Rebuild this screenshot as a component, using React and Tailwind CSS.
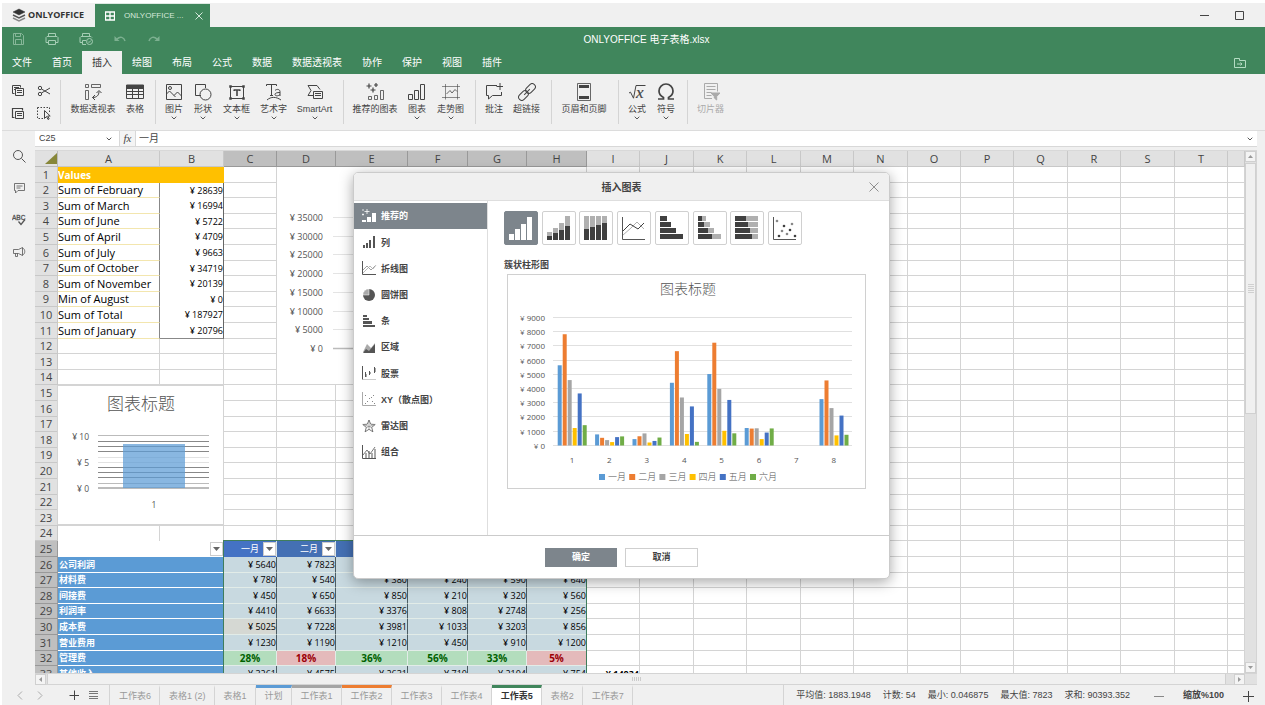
import React from "react";

const MENU = ["文件", "首页", "插入", "绘图", "布局", "公式", "数据", "数据透视表", "协作", "保护", "视图", "插件"];

function Svg({ w, h, children, className = "" }) {
  return (
    <svg width={w} height={h} viewBox={`0 0 ${w} ${h}`} fill="none" stroke="currentColor" className={className} aria-hidden="true">
      {children}
    </svg>
  );
}

const Chevron = () => (
  <Svg w={6} h={4}><path d="M.7.7 3 3 5.300.7" strokeWidth=".9" /></Svg>
);

const Copy = () => (
  <Svg w={14} h={14}><path d="M3.500 9.500h-2v-8h8v2M3 3.500h5M3 5.500h1" /><path d="M4.500 4.500h8v7h-8zM6 6.500h5M6 8.500h5" /></Svg>
);
const Paste = () => (
  <Svg w={14} h={14}><path d="M3.500 11.500h-2v-9h10v2M1.500 2.500h10" strokeWidth="1.200" /><path d="M4.500 5.500h8v7h-8zM6 7.500h5M6 9.500h5" /></Svg>
);
const Cut = () => (
  <Svg w={14} h={14}><circle cx="3" cy="4" r="1.700" /><circle cx="3" cy="10" r="1.700" /><path d="m4.500 5 8.500 5M4.500 9 13 4" /></Svg>
);
const Select = () => (
  <Svg w={14} h={14}><path d="M.5 1.500h12v5M.5 1.500v11h6" strokeDasharray="1.500 1.500" /><path d="M7.500 4.500v8l2-2 1.500 3 1.200-.6-1.500-2.900h2.500z" fill="#f0f0f0" /></Svg>
);

const ribbonIcons = {
  pivot: <><path d="M1.500 1.500h3v3h-3zM7.500 1.500h9v3h-9zM1.500 7.500h3v9h-3z" strokeWidth=".8" /><path d="M8.500 14.500c4 0 6.500-2 6.500-6M12.500 10 15 7.500l2.500 2.500M11 12l-2.500 2.500 2.500 2.500" /></>,
  table: <><path d="M.5 2.500h17v13H.5zM.5 8.500h17M.5 11.500h17M6.500 5v10M12.500 5v10" /><path d="M.5 2h17v3.500H.5z" fill="currentColor" /></>,
  image: <><path d="M1.500 1.500h15v15h-15z" /><circle cx="5" cy="5" r="1.500" /><path d="m1.500 11 3-3 6 6M9 12.500l3.500-3.500 4 4" /></>,
  shape: <><path d="M7 12.500H1.500v-11h10V5" /><circle cx="11.500" cy="11.500" r="5.500" /></>,
  textbox: <><path d="M2.500 3.500h13v12h-13z" /><path d="M1.500 2.500h2v2h-2zM14.500 2.500h2v2h-2zM1.500 14.500h2v2h-2zM14.500 14.500h2v2h-2z" fill="currentColor" strokeWidth=".5" /><path d="M6 7h6M9 7v6M6.200 6.500V8M11.800 6.500V8" strokeWidth="1.600" /></>,
  textart: <><path d="M1.500 3V1.500h10V3M6.500 1.500v11M5 12.500h3M10 7.500c2-2 5-1 5 1v4.500M15 9.500c-3 0-5 .5-5 2s3 2 5 0M2 17c4-3.500 9-3.500 14 0" /></>,
  smart: <><path d="M7 12.500H2l3-5-3-5h9l3 4" /><path d="M7.500 8.500h9v7h-9zM9 10.500h6M9 12.500h6" /></>,
  recommended: <><path d="M3 .5v5M.5 3h5M10 0v4M8 2h4M7 4.500v5M4.500 7h5" strokeWidth="1.200" /><path d="M2.500 13.500h3v3h-3zM8.500 12.500h3v4h-3zM14.500 7.500h3v9h-3z" strokeWidth=".8" /></>,
  chart: <path d="M.5 11.500h4v5h-4zM6.500 7.500h4v9h-4zM12.500 1.500h4v15h-4z" />,
  spark: <><path d="M0 3.500h18M0 14.500h18M3.500 1v15.500M15.500 1v15.500" strokeWidth=".6" /><path d="m4.500 11 3.500-3.500 2 2.500 3-3.500 2 2" strokeWidth=".8" /></>,
  comment: <path d="M12 2.500H1.500v10h2V16l4-3.500h9V9M15 0v7M11.500 3.500h7" />,
  link: <g transform="rotate(-45 9 9)"><rect x="-1.500" y="5.800" width="11" height="6.400" rx="3.200" /><rect x="8.500" y="5.800" width="11" height="6.400" rx="3.200" /><path d="M5 9h8" /></g>,
  header: <><path d="M2.500.5h13v17h-13z" strokeWidth=".8" /><path d="M4 3.500h10M4 14.500h10" strokeWidth="2.800" /></>,
  slicer: <><path d="M10 15.500H2.500V.5h13v8M4.500 3.500h9M4.500 6.500h9M4.500 9.500h5M4.500 12.500h5" /><path d="M9 10h9l-3.300 3.500V17L12.300 15v-1.500z" fill="currentColor" /></>,
};

function RibbonIcon({ name }) {
  if (name === "formula")
    return (
      <Svg w={18} h={18}><path d="m1 10 1.500-.8 3 6L8 2.500h9.500" /><text x="8" y="15" fontSize="17" fontStyle="italic" fontFamily="Liberation Serif, serif" fill="currentColor" strokeWidth=".2">x</text></Svg>
    );
  if (name === "omega")
    return (
      <Svg w={18} h={18}><path d="M1 16h5.500v-1.500C3.500 13 2 10.800 2 8a7 7 0 0 1 14 0c0 2.800-1.500 5-4.500 6.500V16H17" strokeWidth="1.700" /></Svg>
    );
  return <Svg w={18} h={18}>{ribbonIcons[name]}</Svg>;
}

const RIBBON = [
  [["数据透视表", "pivot", "w-[56px]"], ["表格", "table", "w-7"]],
  [["图片", "image", "w-7", 1], ["形状", "shape", "w-[30px]", 1], ["文本框", "textbox", "w-[37px]", 1], ["艺术字", "textart", "w-[37px]", 1], ["SmartArt", "smart", "w-[45px]", 1]],
  [["推荐的图表", "recommended", "w-[54px]"], ["图表", "chart", "w-[30px]", 1], ["走势图", "spark", "w-[37px]", 1]],
  [["批注", "comment", "w-7"], ["超链接", "link", "w-[37px]"]],
  [["页眉和页脚", "header", "w-[56px]"]],
  [["公式", "formula", "w-7", 1], ["符号", "omega", "w-[30px]", 1]],
  [["切片器", "slicer", "w-[37px]", 0, 1]],
];

function TitleBar() {
  return (
    <div className="flex h-6 items-stretch bg-[#f0f0f0]">
      <button className="flex w-[93px] items-center gap-[2px] pl-[10px] text-[#333]">
        <Svg w={14} h={14}>
          <path d="m1 4 6-3 6 3-6 3z" fill="#333" strokeWidth=".5" />
          <path d="m1 7 6 3 6-3" stroke="#555" strokeWidth="1.500" /><path d="m1 10 6 3 6-3" stroke="#888" strokeWidth="1.500" />
        </Svg>
        <span className="font-['Open_Sans',sans-serif] text-[9px] font-bold">ONLYOFFICE</span>
      </button>
      <div className="flex w-[115px] items-center border-t border-[#dfe9e3] bg-[#40865c] pl-[10px] text-[#d4e8db]">
        <Svg w={10} h={10}><path d="M.5 1h9v8h-9zM5 1v8M.5 5h9" stroke="#fff" strokeWidth="1.300" /></Svg>
        <span className="ml-[9px] flex-1 text-[8px]">ONLYOFFICE ...</span>
        <button aria-label="关闭标签" className="mr-[7px]"><Svg w={8} h={8}><path d="m.5.5 7 7M7.500.5l-7 7" /></Svg></button>
      </div>
      <div className="flex flex-1 items-center justify-end gap-[26px] pr-[21px] text-[#444]">
        <button aria-label="最小化"><Svg w={9} h={9}><path d="M0 4.500h9" /></Svg></button>
        <button aria-label="最大化"><Svg w={9} h={9}><path d="M.5.5h8v8h-8z" /></Svg></button>
      </div>
    </div>
  );
}

function Header() {
  return (
    <header className="bg-[#40865c] text-white">
      <div className="flex h-6 items-center">
        <div className="flex flex-1 items-center gap-[18px] pl-2 text-[#a5cdb4]">
          <button aria-label="保存" className="opacity-70"><Svg w={16} h={12}><path d="M3.500.5h8l2 2v9h-10zM5.500.5v3h5v-3M5.500 11.500v-5h6v5" /></Svg></button>
          <button aria-label="打印"><Svg w={16} h={12}><path d="M4.500 3V.5h7V3M4.500 9.500H2v-5l1-1h10l1 1v5h-2.500M4.500 7.500h7v4h-7z" /></Svg></button>
          <button aria-label="快速打印"><Svg w={16} h={12}><path d="M4.500 3V.5h7V3M4.500 9.500H2v-5l1-1h10l1 1M8 7.500H4.500v4H8" /><circle cx="11.500" cy="8.500" r="3" /><path d="m10 8.500 1 1 2-2" /></Svg></button>
          <button aria-label="撤消" className="opacity-60"><Svg w={16} h={12}><path d="M2.500 3v5h5z" fill="currentColor" stroke="none" /><path d="M5 6c3-3 7-2 8 2" strokeWidth="1.500" /></Svg></button>
          <button aria-label="重做" className="opacity-60"><Svg w={16} h={12}><path d="M13.500 3v5h-5z" fill="currentColor" stroke="none" /><path d="M11 6C8 3 4 4 3 8" strokeWidth="1.500" /></Svg></button>
        </div>
        <h1 className="pl-[18px] text-[10px]">ONLYOFFICE 电子表格.xlsx</h1>
        <div className="flex-1" />
      </div>
      <nav className="flex h-[23px] items-stretch text-[10px]">
        {MENU.map((m) => (
          <button key={m} className={m === "插入" ? "bg-[#f0f0f0] px-[10px] text-[#333]" : "px-[10px]"}>{m}</button>
        ))}
        <button aria-label="打开文件位置" className="ml-auto mr-[19px] text-[#b4dcc3]">
          <Svg w={12} h={10}><path d="M.5.5h5v2h6v7H.5zM3 6h5M6.500 4.500 8 6 6.500 7.500" /></Svg>
        </button>
      </nav>
    </header>
  );
}

function Ribbon() {
  return (
    <div className="flex h-[57px] items-start border-b border-[#dcdcdc] bg-[#f0f0f0] pt-[6px] text-[9px] text-[#444]">
      <div className="grid h-11 w-[58px] grid-cols-2 items-center justify-items-center px-[3px]">
        <button aria-label="复制"><Copy /></button>
        <button aria-label="剪切"><Cut /></button>
        <button aria-label="粘贴"><Paste /></button>
        <button aria-label="全选"><Select /></button>
      </div>
      {RIBBON.map((group, i) => (
        <div key={i} className="flex h-11 border-l border-[#d4d4d4] pr-[6px] pl-1">
          {group.map(([label, icon, w, more, off]) => (
            <button key={label} disabled={!!off} className={`${w} flex flex-col items-center whitespace-nowrap pt-[3px] ${off ? "text-[#aaa]" : ""}`}>
              <RibbonIcon name={icon} />
              <span className="mt-[2px] leading-3">{label}</span>
              {more ? <span className="flex h-[6px] items-center"><Chevron /></span> : null}
            </button>
          ))}
        </div>
      ))}
    </div>
  );
}

function SideBar() {
  return (
    <aside className="flex w-[33px] shrink-0 flex-col items-center gap-[18px] bg-[#f0f0f0] pt-[18px] text-[#555]">
      <button aria-label="查找"><Svg w={14} h={14}><circle cx="6" cy="6" r="4.500" /><path d="m9.500 9.500 4 4" /></Svg></button>
      <button aria-label="批注"><Svg w={14} h={14}><path d="M2.500 2.500h10v7H6L3.500 12V9.500h-1zM4.500 5h6M4.500 7h4" strokeWidth=".8" /></Svg></button>
      <button aria-label="拼写检查"><Svg w={14} h={14}><text x="0" y="7" fontSize="6.500" strokeWidth=".3" fill="currentColor" fontFamily="Liberation Sans, sans-serif">ABC</text><path d="m6.500 8.500 2.500 3 4-5" strokeWidth="1.300" /></Svg></button>
      <button aria-label="反馈和支持"><Svg w={14} h={14}><path d="M1.500 4.500h5l4-2v8l-4-2h-5zM3.500 8.500v3h2v-3M10.500 3c3 1 3 6 0 7" strokeWidth=".8" /></Svg></button>
    </aside>
  );
}

function FormulaBar() {
  return (
    <div className="flex h-[15px] items-stretch bg-white text-[9px] text-[#444]">
      <input aria-label="名称框" defaultValue="C25" className="w-[71px] bg-white pl-1 outline-none" />
      <button aria-label="名称列表" className="flex w-[13px] items-center justify-start"><Chevron /></button>
      <button aria-label="插入函数" className="w-[17px] border-x border-[#d8d8d8] bg-[#f4f4f4] font-['Liberation_Serif',serif] text-[11px] italic leading-none">fx</button>
      <input aria-label="编辑栏" defaultValue="一月" className="min-w-0 flex-1 bg-white pl-[3px] text-[10px] outline-none" />
      <button aria-label="展开编辑栏" className="w-[10px]"><Chevron /></button>
    </div>
  );
}

const COLS = [
  ["A", "w-[102px]"], ["B", "w-[64px]"], ["C", "w-[53px]"], ["D", "w-[59px]"], ["E", "w-[72px]"], ["F", "w-[60px]"],
  ["G", "w-[59px]"], ["H", "w-[60px]"], ["I", "w-[53px]"], ["J", "w-[54px]"], ["K", "w-[53px]"], ["L", "w-[54px]"],
  ["M", "w-[53px]"], ["N", "w-[54px]"], ["O", "w-[53px]"], ["P", "w-[53px]"], ["Q", "w-[54px]"], ["R", "w-[53px]"],
  ["S", "w-[54px]"], ["T", "w-[53px]"], ["", ""],
];

const SUMS = [
  ["Sum of February", 28639], ["Sum of March", 16994], ["Sum of June", 5722], ["Sum of April", 4709], ["Sum of July", 9663],
  ["Sum of October", 34719], ["Sum of November", 20139], ["Min of August", 0], ["Sum of Total", 187927], ["Sum of January", 20796],
];

const DATA = [
  ["公司利润", [5640, 7823, 4600, 1230, 3660, 1430]],
  ["材料费", [780, 540, 380, 240, 590, 640]],
  ["间接费", [450, 650, 850, 210, 320, 560]],
  ["利润率", [4410, 6633, 3376, 808, 2748, 256]],
  ["成本费", [5025, 7228, 3981, 1033, 3203, 856]],
  ["营业费用", [1230, 1190, 1210, 450, 910, 1200]],
  ["管理费", [0.28, 0.18, 0.36, 0.56, 0.33, 0.05]],
  ["其他收入", [3261, 4575, 2631, 710, 2104, 754]],
];
const MONTHS = ["一月", "二月", "三月", "四月", "五月", "六月"];

function FilterButton() {
  return (
    <button aria-label="筛选" className="flex h-[14px] w-[13px] shrink-0 items-center justify-center border border-[#ccc] bg-white text-[#666]">
      <Svg w={7} h={4}><path d="M0 0h7L3.500 4z" fill="currentColor" stroke="none" /></Svg>
    </button>
  );
}

const GRID = "border-r border-b border-[#d4d4d4] bg-white";
const NUM = "pl-0 pr-0 text-right text-[9px]";

function Cell({ row, col }) {
  if (row === 1 && col < 2)
    return <td className="bg-[#ffc000] pl-0 text-[10px] font-bold text-white">{col === 0 ? "Values" : ""}</td>;
  if (row >= 2 && row <= 11 && col === 0)
    return <td className="border-r border-b border-r-[#888] border-b-[#f3e6ae] bg-white pl-0">{SUMS[row - 2][0]}</td>;
  if (row >= 2 && row <= 11 && col === 1)
    return <td className={`${NUM} border-r border-r-[#666] bg-white ${row === 11 ? "border-b border-b-[#888]" : ""}`}>¥ {SUMS[row - 2][1]}</td>;
  if (row === 24 && col < 2) return <td className="border-r border-[#d4d4d4] bg-white" />;
  if (row === 25 && col === 0) return <td className="bg-white" />;
  if (row === 25 && col === 1) return <td className="bg-white pr-px"><span className="flex justify-end"><FilterButton /></span></td>;
  if (row === 25 && col < 8)
    return (
      <td className={`border-r border-[#d8e4ea] text-[9px] text-white ${col === 2 ? "bg-[#4472c4]" : "bg-[#4470b4]"}`}>
        <span className="flex items-center justify-end gap-1"><span>{MONTHS[col - 2]}</span><FilterButton /></span>
      </td>
    );
  if (row > 25 && col === 0)
    return <td colSpan={2} className="border-b border-white bg-[#5b9bd5] pl-px text-[9px] font-bold text-white">{DATA[row - 26][0]}</td>;
  if (row === 32 && col < 8) {
    const v = DATA[6][1][col - 2];
    return (
      <td className={`border-r border-b border-[#e2ece8] text-center text-[10px] font-bold ${v < 0.2 ? "bg-[#e4babb] text-[#9c0006]" : "bg-[#b3ddbd] text-[#006100]"}`}>
        {Math.round(v * 100)}%
      </td>
    );
  }
  if (row > 25 && col < 8)
    return <td className={`${NUM} border-r border-b border-r-[#4c5c62] border-b-[#e2ece8] ${row === 30 && col === 2 ? "bg-[#d5d8d3]" : "bg-[#c8d9e0]"}`}>¥ {DATA[row - 26][1][col - 2]}</td>;
  if (row === 33 && col === 8) return <td className={`${GRID} ${NUM} font-bold`}>¥ 14034</td>;
  return <td className={GRID} />;
}

const ROW_HEIGHTS = ["h-4", "h-[15px]", "h-4", "h-[15px]", "h-4"];

function Sheet() {
  const rows = Array.from({ length: 33 }, (_, i) => i + 1);
  return (
    <div className="relative min-w-0 flex-1 overflow-hidden bg-white">
      <table className="w-full table-fixed border-separate border-spacing-0 whitespace-nowrap font-['Open_Sans','Noto_Sans_CJK_SC',sans-serif] text-[11px] leading-[14px] text-black [&_td]:overflow-hidden [&_td]:py-0 [&_th]:p-0">
        <colgroup>
          <col className="w-[23px]" />
          {COLS.map(([l, w]) => <col key={l} className={w} />)}
        </colgroup>
        <thead>
          <tr className="h-4">
            <th className="border-r border-b border-[#bbb] bg-[#e1e1e1]">
              <span className="flex justify-end"><Svg w={12} h={11}><path d="M12 0v11H0z" fill="#87873a" stroke="none" /></Svg></span>
            </th>
            {COLS.map(([l], i) => (
              <th key={l} className={`border-r border-b font-normal text-[#444] ${i > 1 && i < 8 ? "border-[#999] bg-[#bfbfbf]" : "border-[#c8c8c8] bg-[#e1e1e1]"}`}>{l}</th>
            ))}
          </tr>
        </thead>
        <tbody>
          {rows.map((r) => (
            <tr key={r} className={ROW_HEIGHTS[(r - 1) % 5]}>
              <th className={`border-r border-b text-center text-[11px] font-normal text-[#444] ${r > 24 ? "border-[#999] bg-[#bfbfbf]" : "border-[#c8c8c8] bg-[#e1e1e1]"}`}>{r}</th>
              {COLS.map(([l], c) => (r > 25 && c === 1 ? null : <Cell key={l} row={r} col={c} />))}
            </tr>
          ))}
        </tbody>
      </table>
      <div className="pointer-events-none absolute top-[389px] left-[188px] h-[160px] w-[364px] border border-[#3f7d5c]" />
      <div className="absolute top-4 left-[242px] h-[218px] w-[309px] border-b border-[#d4d4d4] bg-white"><BackChart /></div>
      <div className="absolute top-[234px] left-[22px] h-[140px] w-[167px] border border-[#d4d4d4] bg-white"><SmallChart /></div>
    </div>
  );
}

const CHART_FONT = "Open Sans, Noto Sans CJK SC, sans-serif";

function BackChart() {
  return (
    <svg width="308" height="216" viewBox="0 0 308 216" fontFamily={CHART_FONT} fontSize="9" fill="#555">
      {Array.from({ length: 8 }, (_, i) => {
        const y = 50.500 + Math.round(i * 18.700);
        return (
          <g key={i}>
            <path d={`M56 ${y}h240`} stroke={i === 7 ? "#bbb" : "#e4e4e4"} strokeWidth={i === 7 ? 1.500 : 1} />
            <text x="46" y={y + 3} textAnchor="end">¥ {35000 - i * 5000}</text>
          </g>
        );
      })}
    </svg>
  );
}

function SmallChart() {
  return (
    <svg width="165" height="137" viewBox="0 0 165 137" fontFamily={CHART_FONT} fontSize="8.500" fill="#555">
      <text x="83" y="24" fontSize="17" fontWeight="300" textAnchor="middle">图表标题</text>
      {[49.500, 55.500, 60.500, 65.500, 71.500, 76.500, 81.500, 86.500, 91.500, 97.500].map((y, i) => (
        <path key={y} d={`M40 ${y}h111`} stroke={i === 4 || i === 5 ? "#e2e2e2" : i === 0 || i === 9 ? "#bbb" : "#888"} />
      ))}
      <path d="M40 102h111" stroke="#bbb" strokeWidth="2" />
      <path d="M65 58h62v44H65z" fill="#5b9bd5" opacity=".72" />
      <text x="31" y="54" textAnchor="end">¥ 10</text>
      <text x="31" y="80" textAnchor="end">¥ 5</text>
      <text x="31" y="106" textAnchor="end">¥ 0</text>
      <text x="96" y="122" textAnchor="middle">1</text>
    </svg>
  );
}

const SERIES = ["#5b9bd5", "#ed7d31", "#a5a5a5", "#ffc000", "#4472c4", "#70ad47"];

function PreviewChart() {
  return (
    <svg width="357" height="213" viewBox="0 0 357 213" fontFamily={CHART_FONT} fontSize="8" fill="#555">
      <text x="180" y="19" fontSize="14" fontWeight="300" textAnchor="middle">图表标题</text>
      {Array.from({ length: 10 }, (_, i) => {
        const y = 42.500 + Math.round(i * 14.200);
        return (
          <g key={i}>
            <path d={`M45 ${y}h299`} stroke="#e0e0e0" />
            <text x="37" y={y + 3} textAnchor="end">¥ {9000 - i * 1000}</text>
          </g>
        );
      })}
      {DATA.map(([name, values], c) => (
        <g key={name}>
          {values.map((v, s) => (
            <rect key={s} x={49.700 + c * 37.400 + s * 5} width="4" y={170.500 - (v * 128) / 9000} height={(v * 128) / 9000} fill={SERIES[s]} />
          ))}
          <text x={64 + c * 37.400} y="188" textAnchor="middle">{c + 1}</text>
        </g>
      ))}
      {MONTHS.map((m, i) => (
        <g key={m}>
          <rect x={91 + i * 30.200} y="199" width="6" height="6" fill={SERIES[i]} />
          <text x={100 + i * 30.200} y="205" fontSize="9" fontWeight="300">{m}</text>
        </g>
      ))}
    </svg>
  );
}

const D = "#555";
const L = "#aaa";
const listIcons = [
  <><path d="M0 11h4v2H0zM5 8h4v5H5zM10 4h4v9h-4z" fill="#fff" stroke="none" /><path d="M5 0v5M2.500 2.500h5M1 4.500v2M0 5.500h2M1 0v2" stroke="#fff" strokeWidth=".8" /></>,
  <path d="M1 10h2v3H1zM4 8h2v5H4zM7 5h2v8H7zM11 1h2v12h-2z" fill={D} stroke="none" />,
  <><path d="M.5 0v13.500H14" stroke={D} /><path d="m1 9 4-4 4 4 4-4" stroke="#888" strokeWidth=".8" /><path d="m1 12 7-7 3 3 3-4" stroke={L} strokeWidth=".8" /></>,
  <><circle cx="7" cy="7" r="6" fill={D} stroke="none" /><path d="M7 7V1a6 6 0 0 0-6 6z" fill={L} stroke="#fff" strokeWidth=".5" /></>,
  <><path d="M1 1h4v2H1zM1 4h6v2H1zM1 7h9v3H1zM1 11h12v2H1z" fill={D} stroke="none" /></>,
  <><path d="m1 12 4-8 4 4 4-5v9z" fill={L} stroke="none" /><path d="m1 13 3-4 3 2 6-7v9z" fill={D} stroke="none" /></>,
  <><path d="M.5 0v13.500" stroke={D} /><path d="M1 13.500h13" stroke="#ccc" /><path d="M3.500 6v5M7.500 5v4M12.500 1v6" stroke={D} /><path d="M3 8h1.500v3H3zM7 6h1.500v2H7zM12 2h1.500v4H12z" fill={D} stroke="none" /></>,
  <><path d="M.5 0v13.500H14" stroke={L} /><path d="M3 3h1v1H3zM7 6h1v1H7zM11 3h1v1h-1zM5 9h1v1H5zM9 5h1v1H9zM10 9h1v1h-1zM3 11h1v1H3zM12 11h1v1h-1z" fill="#888" stroke="none" /></>,
  <><path d="m7 1 1.700 4.200 4.500.3-3.500 2.900 1.200 4.400L7 10.300l-3.900 2.500 1.200-4.400L.8 5.500l4.500-.3z" stroke={D} strokeWidth=".8" /><path d="M7 1v9M1 5.500l9 3M13 5.500l-9 3" stroke="#888" strokeWidth=".7" /></>,
  <><path d="M.5 0v13.500H14" stroke={D} /><path d="M3 8h2v5H3zM6 6h2v7H6zM9 8h2v5H9zM12 4h2v9h-2z" fill={L} stroke="none" /><path d="m1 10 4-5 3 4 5-7" stroke={D} strokeWidth=".8" /></>,
];
const CATEGORIES = ["推荐的", "列", "折线图", "圆饼图", "条", "区域", "股票", "XY（散点图）", "雷达图", "组合"];

const K = "#404040";
const G = "#b0b0b0";
const typeIcons = [
  ["簇状柱形图", <path d="M0 18h5v6H0zM6 13h5v11H6zM12 8h5v16h-5zM18 1h5v23h-5z" fill="#fff" />],
  ["堆积柱形图", <><path d="M0 16h5v4H0zM6 12h5v5H6zM12 7h5v7h-5zM18 0h5v10h-5z" fill={G} /><path d="M0 20h5v4H0zM6 17h5v7H6zM12 14h5v10h-5zM18 10h5v14h-5z" fill={K} /></>],
  ["百分比堆积柱形图", <><path d="M0 0h5v13H0zM6 0h5v11H6zM12 0h5v9h-5zM18 0h5v7h-5z" fill={G} /><path d="M0 13h5v11H0zM6 11h5v13H6zM12 9h5v15h-5zM18 7h5v17h-5z" fill={K} /></>],
  ["折线图", <><path d="m1 19 8-7 6-6 7 7" fill="none" stroke={G} /><path d="m1 15 7-7 8 5 6-6" fill="none" stroke={K} /><path d="M.5 1v22.500H23" fill="none" stroke={D} /></>],
  ["簇状条形图", <path d="M0 0h7v5H0zM0 6h11v5H0zM0 12h16v5H0zM0 18h23v5H0z" fill={K} />],
  ["堆积条形图", <><path d="M4 0h4v5H4zM6 6h6v5H6zM10 12h6v5h-6zM14 18h9v5h-9z" fill={G} /><path d="M0 0h4v5H0zM0 6h6v5H0zM0 12h10v5H0zM0 18h14v5H0z" fill={K} /></>],
  ["百分比堆积条形图", <><path d="M11 0h12v5H11zM13 6h10v5H13zM15 12h8v5h-8zM17 18h6v5h-6z" fill={G} /><path d="M0 0h11v5H0zM0 6h13v5H0zM0 12h15v5H0zM0 18h17v5H0z" fill={K} /></>],
  ["散点图", <><path d="M.5 1v22.500H23" fill="none" stroke={D} /><g fill={K}><circle cx="11" cy="10" r="1.300" /><circle cx="17" cy="14" r="1.300" /><circle cx="6" cy="20" r="1.300" /><circle cx="22" cy="20" r="1.300" /></g><g fill="#888"><circle cx="4" cy="5" r="1.300" /><circle cx="19" cy="8" r="1.300" /><circle cx="9" cy="15" r="1.300" /><circle cx="14" cy="18" r="1.300" /></g></>],
];

function ChartDialog() {
  return (
    <div className="absolute inset-0 flex items-start justify-center pt-[172px] pr-[22px]">
      <div role="dialog" aria-label="插入图表" className="w-[537px] overflow-hidden rounded-[5px] border border-[#cbcbcb] bg-white text-[#444] shadow-[0_3px_14px_rgba(0,0,0,0.35)]">
        <div className="flex h-7 items-center border-b border-[#dedede] bg-[#f0f0f0] pt-px">
          <h2 className="flex-1 pl-5 text-center text-[10px] font-bold">插入图表</h2>
          <button aria-label="关闭" className="mr-[10px] text-[#777]"><Svg w={10} h={10}><path d="m.5.5 9 9M9.500.5l-9 9" strokeWidth=".8" /></Svg></button>
        </div>
        <div className="flex h-[334px]">
          <ul className="grid h-[264px] w-[133px] shrink-0 auto-rows-fr pt-[2px] text-[9px] font-bold">
            {CATEGORIES.map((c, i) => (
              <li key={c} className="flex">
                <button className={`flex w-full items-center gap-1 pt-px pl-2 ${i === 0 ? "bg-[#7d858c] text-white" : ""}`}>
                  <Svg w={15} h={15}>{listIcons[i]}</Svg><span className="pt-px">{c}</span>
                </button>
              </li>
            ))}
          </ul>
          <div className="border-l border-[#dedede] pl-4">
            <div className="flex w-[298px] justify-between pt-[10px]">
              {typeIcons.map(([name, icon], i) => (
                <button key={name} aria-label={name} className={`flex h-[34px] w-[34px] items-center justify-center rounded-[2px] border ${i === 0 ? "border-[#7d858c] bg-[#7d858c]" : "border-[#d0d0d0]"}`}>
                  <svg width="24" height="24" viewBox="0 0 24 24" aria-hidden="true">{icon}</svg>
                </button>
              ))}
            </div>
            <h3 className="mt-[13px] text-[9px] font-bold leading-[14px]">簇状柱形图</h3>
            <div className="mt-[2px] ml-[3px] border border-[#d0d0d0]"><PreviewChart /></div>
          </div>
        </div>
        <div className="flex h-[43px] items-center justify-center gap-2 border-t border-[#cbcbcb] text-[9px] font-bold">
          <button className="h-[19px] w-[72px] bg-[#7d858c] pt-px text-white">确定</button>
          <button className="h-[19px] w-[73px] border border-[#cfcfcf] bg-white pt-px">取消</button>
        </div>
      </div>
    </div>
  );
}

function Arrow({ d, label }) {
  return (
    <button aria-label={label} className="flex h-[11px] w-[11px] shrink-0 items-center justify-center border border-[#d0d0d0] bg-[#f4f4f4] text-[#999]">
      <Svg w={5} h={5}><path d={d} fill="currentColor" stroke="none" /></Svg>
    </button>
  );
}

function VerticalScroll() {
  return (
    <div className="flex w-3 shrink-0 flex-col border-r border-[#d4d4d4] bg-[#e1e1e1]">
      <Arrow d="M0 4h5L2.500 1z" label="向上" />
      <div className="mt-px flex h-[251px] w-[11px] flex-col items-center justify-center gap-px border border-[#d0d0d0] bg-[#f0f0f0]">
        {[0, 1, 2, 3, 4].map((i) => <span key={i} className="h-px w-[6px] bg-[#d0d0d0]" />)}
      </div>
      <div className="flex-1" />
      <Arrow d="M0 1h5L2.500 4z" label="向下" />
    </div>
  );
}

function HorizontalScroll() {
  return (
    <div className="flex h-3 shrink-0 items-stretch border-y border-[#d4d4d4] bg-[#e1e1e1] pr-3">
      <Arrow d="M4 0v5L1 2.500z" label="向左" />
      <div className="mr-2 ml-px flex flex-1 items-center justify-center gap-px border-x border-[#d0d0d0] bg-[#f0f0f0]">
        {[0, 1, 2, 3, 4].map((i) => <span key={i} className="h-1 w-px bg-[#ccc]" />)}
      </div>
      <Arrow d="M1 0v5l3-2.500z" label="向右" />
    </div>
  );
}

const TABS = [
  ["工作表6"], ["表格1 (2)"], ["表格1"], ["计划", "border-t-[#5b9bd5]"], ["工作表1", "border-t-[#a5a5a5]"], ["工作表2", "border-t-[#ed7d31]"],
  ["工作表3"], ["工作表4"], ["工作表5", "border-t-[#40865c]"], ["表格2"], ["工作表7"],
];

function StatusBar() {
  return (
    <footer className="flex h-5 shrink-0 items-stretch whitespace-nowrap bg-[#f0f0f0] text-[9px] text-[#444]">
      <div className="flex w-[108px] items-center border-r border-[#d4d4d4] pl-[15px] text-[#aaa]">
        <button aria-label="上一张"><Svg w={6} h={9}><path d="m5 .5-4 4 4 4" /></Svg></button>
        <button aria-label="下一张" className="ml-[14px]"><Svg w={6} h={9}><path d="m1 .5 4 4-4 4" /></Svg></button>
        <button aria-label="添加工作表" className="ml-[26px] text-[#444]"><Svg w={10} h={10}><path d="M5.500 .5v10M.5 5.500h10" /></Svg></button>
        <button aria-label="工作表列表" className="ml-[10px] text-[#777]"><Svg w={9} h={10}><path d="M0 1.500h9M0 3.500h9M0 6.500h9M0 8.500h9" /></Svg></button>
      </div>
      <div className="flex flex-1">
        {TABS.map(([t, c]) => (
          <button key={t} className={`border-t-[3px] border-r border-r-[#d4d4d4] pr-2 pl-[9px] ${c || "border-t-transparent"} ${t === "工作表5" ? "bg-white font-bold text-[#333]" : "text-[#999]"}`}>{t}</button>
        ))}
      </div>
      <div className="flex items-center gap-3 border-l border-[#d4d4d4] pt-[2px] pr-[11px] pl-3">
        <span>平均值: 1883.1948</span><span>计数: 54</span><span>最小: 0.046875</span><span>最大值: 7823</span><span>求和: 90393.352</span>
        <button aria-label="缩小" className="ml-3 text-[#888]"><Svg w={10} h={10}><path d="M0 5.500h10" /></Svg></button>
        <span className="mx-[7px] font-bold">缩放%100</span>
        <button aria-label="放大"><Svg w={11} h={11}><path d="M5.500 0v11M0 5.500h11" /></Svg></button>
      </div>
    </footer>
  );
}

export default function App() {
  return (
    <div className="relative flex h-screen flex-col overflow-hidden bg-white pt-[3px] pl-[2px] font-['Liberation_Sans','Noto_Sans_CJK_SC',sans-serif]">
      <TitleBar />
      <Header />
      <Ribbon />
      <div className="flex min-h-0 flex-1">
        <SideBar />
        <main className="flex min-w-0 flex-1 flex-col">
          <div className="flex min-h-0 flex-1">
            <div className="flex min-w-0 flex-1 flex-col">
              <FormulaBar />
              <div className="h-[5px] shrink-0 border-y border-[#d8d8d8] bg-[#f0f0f0]" />
              <div className="flex min-h-0 flex-1"><Sheet /><VerticalScroll /></div>
              <HorizontalScroll />
            </div>
            <div className="w-2 shrink-0 bg-[#f0f0f0]" />
          </div>
        </main>
      </div>
      <StatusBar />
      <ChartDialog />
    </div>
  );
}
